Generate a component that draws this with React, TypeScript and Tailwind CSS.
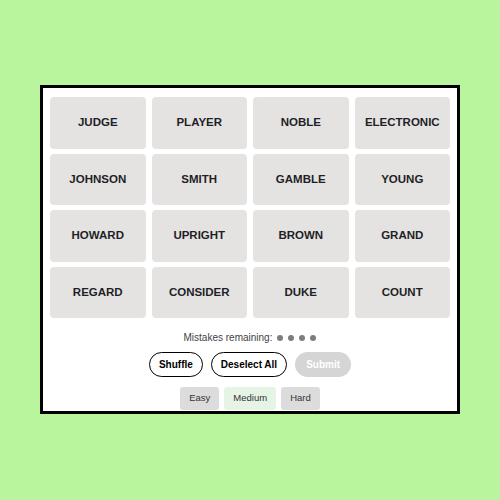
import React, { useState } from 'react';

const WORDS = [
  'JUDGE', 'PLAYER', 'NOBLE', 'ELECTRONIC',
  'JOHNSON', 'SMITH', 'GAMBLE', 'YOUNG',
  'HOWARD', 'UPRIGHT', 'BROWN', 'GRAND',
  'REGARD', 'CONSIDER', 'DUKE', 'COUNT',
];

const LEVELS = ['Easy', 'Medium', 'Hard'];

export default function App() {
  const [level, setLevel] = useState('Medium');
  const [selected, setSelected] = useState<string[]>([]);

  const toggle = (w: string) => {
    setSelected(s => (s.includes(w) ? s.filter(x => x !== w) : s.length < 4 ? [...s, w] : s));
  };

  return (
    <div
      className="min-h-[500px] w-full bg-[#b8f59c] flex justify-center pt-[85px]"
      style={{ fontFamily: '"Liberation Sans", Arial, sans-serif' }}
    >
      <div className="w-[420px] h-[329px] border-[3px] border-black bg-white flex flex-col items-center pt-[9px] px-[7px] overflow-hidden">
        <div className="grid grid-cols-4 gap-x-[6px] gap-y-[5px] w-full">
          {WORDS.map(w => (
            <button
              key={w}
              onClick={() => toggle(w)}
              className={
                'h-[51.5px] rounded-[4px] flex items-center justify-center text-[11.5px] font-bold ' +
                (selected.includes(w) ? 'bg-[#5a594e] text-white' : 'bg-[#e4e3e1] text-[#1f1f27]')
              }
            >
              {w}
            </button>
          ))}
        </div>

        <div className="mt-[12.5px] h-[14px] flex items-center gap-[5px] text-[10px] text-[#3f3f46]">
          <span>Mistakes remaining:</span>
          <div className="flex items-center gap-[5px]">
            {[0, 1, 2, 3].map(i => (
              <span key={i} className="w-[6px] h-[6px] rounded-full bg-[#7d7d7d]" />
            ))}
          </div>
        </div>

        <div className="mt-[7px] flex items-center gap-[8px]">
          <button className="h-[25px] px-[9px] rounded-full border border-black bg-white text-[10px] font-bold text-black">
            Shuffle
          </button>
          <button
            onClick={() => setSelected([])}
            className="h-[25px] px-[9px] rounded-full border border-black bg-white text-[10px] font-bold text-black"
          >
            Deselect All
          </button>
          <button className="h-[25px] px-[11px] rounded-full bg-[#d5d5d5] text-[10px] font-bold text-white">
            Submit
          </button>
        </div>

        <div className="mt-[10px] flex items-center gap-[5px]">
          {LEVELS.map(l => (
            <button
              key={l}
              onClick={() => setLevel(l)}
              className={
                'h-[23px] px-[9px] rounded-[3px] text-[9.5px] text-[#333] ' +
                (l === level ? 'bg-[#e6f4e6]' : 'bg-[#dcdcdc]')
              }
            >
              {l}
            </button>
          ))}
        </div>
      </div>
    </div>
  );
}
